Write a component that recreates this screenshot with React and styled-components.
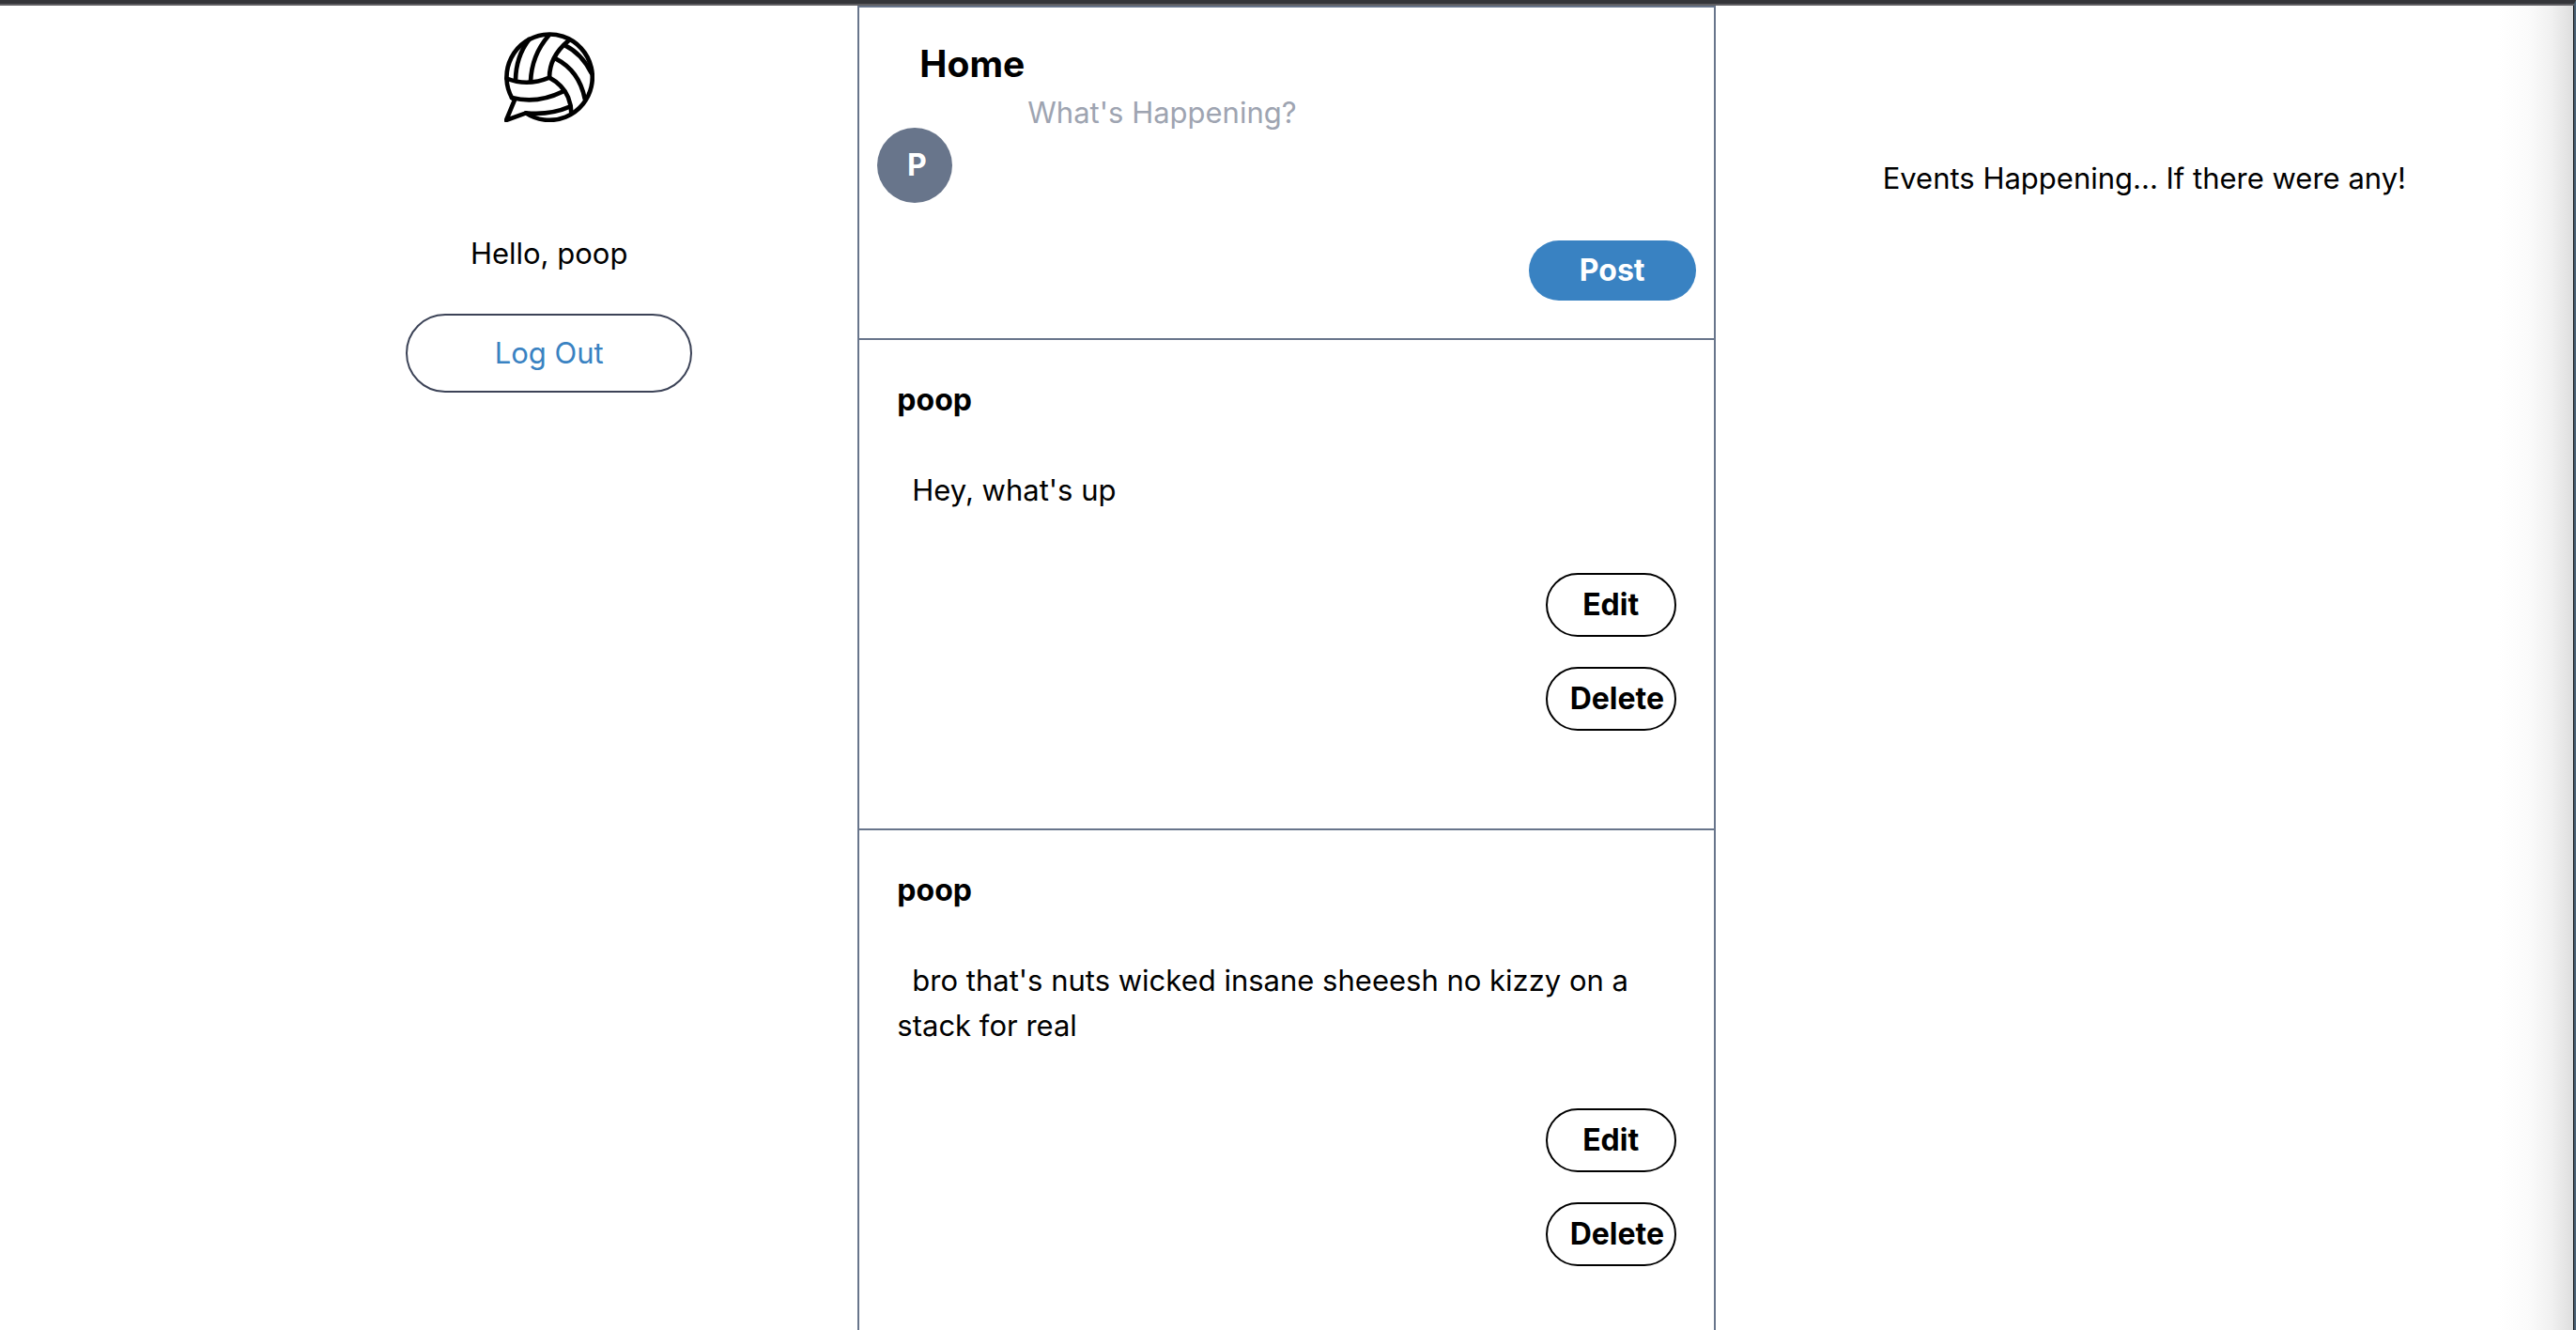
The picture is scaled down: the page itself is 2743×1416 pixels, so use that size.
import React from "react";
import styled, { createGlobalStyle } from "styled-components";

const slate = "#68758b";
const blue = "#3982c2";

const GlobalStyle = createGlobalStyle`
  *, *::before, *::after { box-sizing: border-box; }
  body { margin: 0; background: #fff; }
  button, textarea, h1, h2, p { font: inherit; margin: 0; }
`;

const Page = styled.div`
  display: grid;
  grid-template-columns: repeat(3, minmax(0, 1fr));
  height: 100vh;
  overflow: hidden;
  border-top: 4px solid #343539;
  border-right: 2px solid #4d6478;
  box-shadow: inset 0 2px 0 #5f5e62, inset -1px 0 0 #080a0c;
  padding: 2px 1px 0 0;
  font-family: Inter, "Liberation Sans", sans-serif;
  font-size: 31px;
  line-height: 48px;
  color: #000;
`;

const Sidebar = styled.nav`
  display: flex;
  flex-direction: column;
  align-items: center;
  padding: 28px 0 0 256px;
`;

const Logo = styled.svg`
  width: 96px;
  height: 96px;
  margin-bottom: 116px;
  fill: none;
  stroke: #000;
  stroke-width: 14;
  stroke-linecap: round;
  stroke-linejoin: round;
`;

const LogOutButton = styled.button`
  width: 305px;
  margin-top: 40px;
  padding: 16px;
  border: 2px solid #3c4357;
  border-radius: 42px;
  background: none;
  color: ${blue};
`;

const Feed = styled.main`
  border: 2px solid ${slate};
  border-bottom: 0;
  overflow-y: auto;
  scrollbar-width: none;
`;

const Composer = styled.form`
  display: flex;
  flex-direction: column;
  padding: 32px 19px 40px;
  border-bottom: 2px solid ${slate};
`;

const Title = styled.h1`
  && {
    padding-left: 45px;
    font-size: 39px;
    font-weight: 700;
    line-height: 56px;
  }
`;

const ComposerRow = styled.div`
  display: flex;
  align-items: center;
  gap: 80px;
`;

const Avatar = styled.div`
  flex: none;
  width: 80px;
  height: 80px;
  padding-left: 4px;
  border-radius: 50%;
  background: ${slate};
  color: #fff;
  font-size: 32px;
  font-weight: 700;
  line-height: 80px;
  text-align: center;
`;

const MessageBox = styled.textarea`
  flex: 1;
  height: 160px;
  padding: 0;
  border: 0;
  outline: 0;
  resize: none;
  background: none;
  &::placeholder { color: #9ea4b1; opacity: 1; }
`;

const PostButton = styled.button`
  && { font-size: 32px; font-weight: 700; }
  align-self: flex-end;
  width: 178px;
  padding: 8px 16px;
  border: 0;
  border-radius: 32px;
  background: ${blue};
  color: #fff;
`;

const Card = styled.article`
  display: flex;
  flex-direction: column;
  padding: 40px 40px 104px;
  border-bottom: 2px solid ${slate};
`;

const Author = styled.h2`
  && { font-size: 32px; font-weight: 700; }
`;

const Message = styled.p`
  && { margin: 48px 0 64px; }
  text-indent: 16px;
`;

const Actions = styled.div`
  display: flex;
  flex-direction: column;
  align-items: flex-end;
  gap: 32px;
`;

const ActionButton = styled.button`
  && { font-size: 32px; font-weight: 700; }
  width: 139px;
  padding: 8px 24px;
  border: 2px solid #000;
  border-radius: 34px;
  background: none;
  color: #000;
  white-space: nowrap;
`;

const Events = styled.aside`
  padding-top: 160px;
  text-align: center;
  background: linear-gradient(to left, #dedede, #f1f1f1 24px, #fbfbfb 48px, #fff 80px);
`;

const posts = [
  { id: 1, author: "poop", text: "Hey, what's up" },
  { id: 2, author: "poop", text: "bro that's nuts wicked insane sheeesh no kizzy on a stack for real" },
];

function VolleyballLogo() {
  return (
    <Logo viewBox="51 41 288 288" role="img" aria-label="Volleyball">
      <path d="M120 300A137 137 0 1 0 75 251L84 258L57 323Z" />
      <path d="M59 190Q125 216 195 187Q195 120 255 70" />
      <path d="M195 187Q238 210 255 250Q265 275 265 300" />
      <path d="M135 200Q138 115 193 52" />
      <path d="M87 195Q88 120 130 65" />
      <path d="M216 127Q290 165 308 254" />
      <path d="M245 84Q298 110 329 172" />
      <path d="M75 251Q155 272 237 232" />
      <path d="M120 300Q195 308 260 280" />
    </Logo>
  );
}

export default function App() {
  return (
    <>
      <GlobalStyle />
      <Page>
        <Sidebar>
          <VolleyballLogo />
          <p>Hello, poop</p>
          <LogOutButton type="button">Log Out</LogOutButton>
        </Sidebar>
        <Feed>
          <Composer onSubmit={(e) => e.preventDefault()}>
            <Title>Home</Title>
            <ComposerRow>
              <Avatar>P</Avatar>
              <MessageBox aria-label="What's Happening?" placeholder="What's Happening?" />
            </ComposerRow>
            <PostButton type="submit">Post</PostButton>
          </Composer>
          {posts.map((post) => (
            <Card key={post.id}>
              <Author>{post.author}</Author>
              <Message>{post.text}</Message>
              <Actions>
                <ActionButton type="button">Edit</ActionButton>
                <ActionButton type="button">Delete</ActionButton>
              </Actions>
            </Card>
          ))}
        </Feed>
        <Events>
          <p>Events Happening... If there were any!</p>
        </Events>
      </Page>
    </>
  );
}
